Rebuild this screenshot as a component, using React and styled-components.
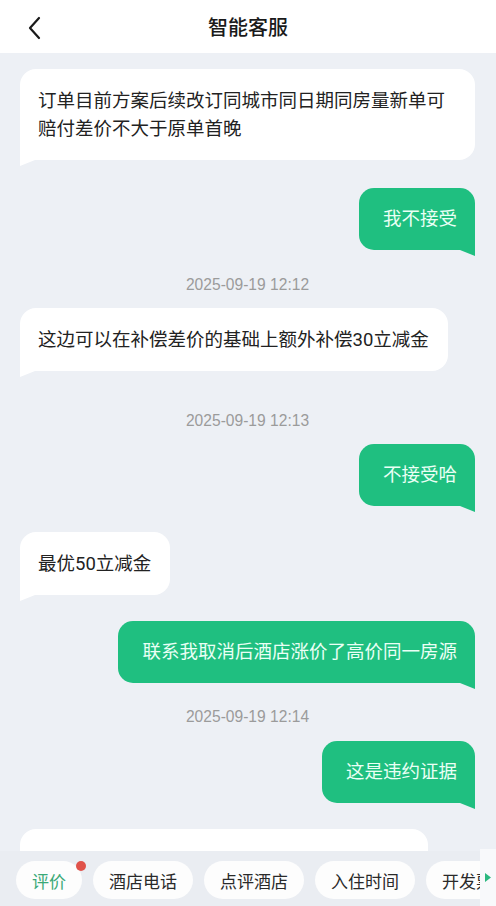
import React from 'react'
import styled, { createGlobalStyle } from 'styled-components'

const GlobalStyle = createGlobalStyle`
  html, body {
    margin: 0;
    padding: 0;
    background: #edf0f5;
  }
  body {
    font-family: Roboto, "Noto Sans CJK SC", sans-serif;
  }
`

const Page = styled.div`
  display: flex;
  flex-direction: column;
  height: 100vh;
  overflow: hidden;
`

const Header = styled.header`
  position: relative;
  flex: 0 0 53px;
  display: flex;
  align-items: center;
  justify-content: center;
  background: #fff;
`

const BackButton = styled.button`
  position: absolute;
  left: 22px;
  top: 15px;
  width: 24px;
  height: 26px;
  margin: 0;
  padding: 0;
  border: none;
  background: none;
  display: flex;
  align-items: center;
  justify-content: center;
  color: #1a1a1a;
`

const Title = styled.h1`
  margin: 0;
  font-size: 20px;
  font-weight: 500;
  color: #1a1a1a;
  letter-spacing: 0;
`

const Chat = styled.main`
  flex: 1;
  overflow: hidden;
  display: flex;
  flex-direction: column;
  padding: 0 21px 0 20px;
`

const Row = styled.div`
  display: flex;
  justify-content: ${props => props.mine ? 'flex-end' : 'flex-start'};
  margin-top: ${props => props.gap}px;
  flex-shrink: 0;
`

const Bubble = styled.div`
  position: relative;
  max-width: 418px;
  padding: ${props => props.mine ? '17px 18px 17px 24px' : '17.5px 19px 17.5px 18px'};
  font-size: 18.5px;
  line-height: 28px;
  color: ${props => props.mine ? '#eafff5' : '#222'};
  background: ${props => props.mine ? '#1fbf80' : '#fff'};
  border-radius: ${props => props.mine ? '15px 15px 0 15px' : '16px 16px 16px 0'};
  ${props => props.fixedWidth ? `width: ${props.fixedWidth}px; min-height: 63px; box-sizing: border-box;` : ''}

  &::after {
    content: '';
    position: absolute;
    bottom: -6px;
    width: 15px;
    height: 6px;
    background: inherit;
    ${props => props.mine
      ? 'right: 0; clip-path: polygon(0 0, 100% 0, 100% 100%);'
      : 'left: 0; clip-path: polygon(0 0, 100% 0, 0 100%);'}
  }
`

const Time = styled.div`
  margin-top: ${props => props.gap}px;
  flex-shrink: 0;
  text-align: center;
  font-family: "Liberation Sans", Arial, sans-serif;
  font-size: 15.6px;
  line-height: 20px;
  color: #9b9b9b;
`

const Bar = styled.footer`
  flex: 0 0 55px;
  display: flex;
  align-items: stretch;
  background: #eaedf2;
`

const Chips = styled.div`
  flex: 1;
  display: flex;
  gap: 11px;
  padding: 10px 0 0 16px;
  overflow: hidden;
`

const Chip = styled.span`
  position: relative;
  flex-shrink: 0;
  height: 38px;
  padding: 0 16px;
  display: flex;
  align-items: center;
  border-radius: 19px;
  background: #fdfdfd;
  font-size: 17px;
  color: ${props => props.active ? '#3aa978' : '#2a2a2a'};
`

const Dot = styled.i`
  position: absolute;
  top: 0;
  right: -4px;
  width: 10px;
  height: 10px;
  border-radius: 50%;
  background: #e0524a;
`

const More = styled.div`
  flex: 0 0 16px;
  display: flex;
  align-items: center;
  justify-content: center;
  margin-top: -2px;
  background: #f8f9fb;
`

const messages = [
  { type: 'msg', gap: 16, text: '订单目前方案后续改订同城市同日期同房量新单可赔付差价不大于原单首晚' },
  { type: 'msg', mine: true, gap: 28, text: '我不接受' },
  { type: 'time', gap: 25, text: '2025-09-19 12:12' },
  { type: 'msg', gap: 13, text: '这边可以在补偿差价的基础上额外补偿30立减金' },
  { type: 'time', gap: 40, text: '2025-09-19 12:13' },
  { type: 'msg', mine: true, gap: 13, text: '不接受哈' },
  { type: 'msg', gap: 26, text: '最优50立减金' },
  { type: 'msg', mine: true, gap: 26, text: '联系我取消后酒店涨价了高价同一房源' },
  { type: 'time', gap: 24, text: '2025-09-19 12:14' },
  { type: 'msg', mine: true, gap: 14, text: '这是违约证据' },
  { type: 'msg', gap: 26, width: 408, text: '' },
]

const chips = ['评价', '酒店电话', '点评酒店', '入住时间', '开发票']

export default function App() {
  return (
    <Page>
      <GlobalStyle />
      <Header>
        <BackButton aria-label="返回">
          <svg width="14" height="24" viewBox="0 0 14 24" fill="none">
            <polyline points="12,2 3,12 12,22" stroke="currentColor" strokeWidth="2.2" strokeLinecap="round" strokeLinejoin="round" />
          </svg>
        </BackButton>
        <Title>智能客服</Title>
      </Header>
      <Chat>
        {messages.map((m, i) => m.type === 'time'
          ? <Time key={i} gap={m.gap}>{m.text}</Time>
          : (
            <Row key={i} mine={m.mine} gap={m.gap}>
              <Bubble mine={m.mine} fixedWidth={m.width}>{m.text}</Bubble>
            </Row>
          ))}
      </Chat>
      <Bar>
        <Chips>
          {chips.map((c, i) => (
            <Chip key={c} active={i === 0}>
              {c}
              {i === 0 && <Dot />}
            </Chip>
          ))}
        </Chips>
        <More>
          <svg width="6" height="9" viewBox="0 0 6 9">
            <polygon points="0,0 6,4.5 0,9" fill="#2bb87f" />
          </svg>
        </More>
      </Bar>
    </Page>
  )
}
